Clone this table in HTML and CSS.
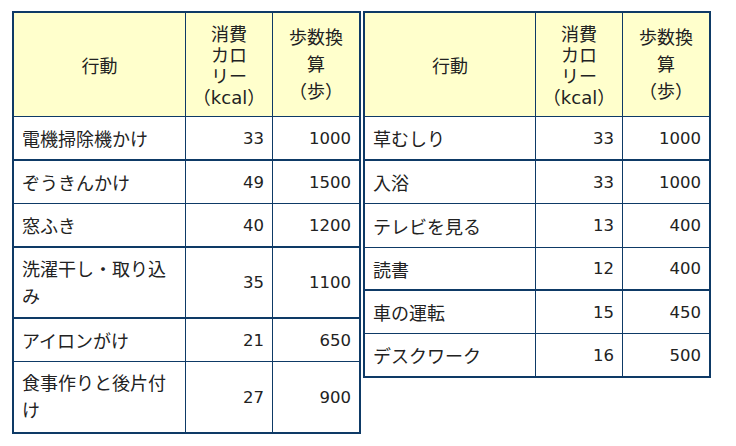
FILE: index.html
```html
<!DOCTYPE html>
<html lang="ja">
<head>
<meta charset="utf-8">
<link rel="stylesheet" href="styles.css">
</head>
<body>
<div class="wrap">
  <table class="tbl">
    <colgroup><col class="c1"><col class="c2"><col class="c3"></colgroup>
    <tr class="head">
      <th class="act">行動</th>
      <th class="kcal">消費<br>カロ<br>リー<br>（kcal）</th>
      <th class="steps thick-r">歩数換<br>算<br>（歩）</th>
    </tr>
    <tr class="r44 tb"><td>電機掃除機かけ</td><td class="num">33</td><td class="num thick-r">1000</td></tr>
    <tr class="r43"><td>ぞうきんかけ</td><td class="num">49</td><td class="num thick-r">1500</td></tr>
    <tr class="r44 tb"><td>窓ふき</td><td class="num">40</td><td class="num thick-r">1200</td></tr>
    <tr class="r71 tb"><td class="two">洗濯干し・取り込<br>み</td><td class="num">35</td><td class="num thick-r">1100</td></tr>
    <tr class="r43"><td>アイロンがけ</td><td class="num">21</td><td class="num thick-r">650</td></tr>
    <tr class="r72 tb"><td class="two">食事作りと後片付<br>け</td><td class="num">27</td><td class="num thick-r">900</td></tr>
  </table>
  <table class="tbl right">
    <colgroup><col class="c1r"><col class="c2"><col class="c3"></colgroup>
    <tr class="head">
      <th class="act">行動</th>
      <th class="kcal">消費<br>カロ<br>リー<br>（kcal）</th>
      <th class="steps thick-r">歩数換<br>算<br>（歩）</th>
    </tr>
    <tr class="r44 tb"><td>草むしり</td><td class="num">33</td><td class="num thick-r">1000</td></tr>
    <tr class="r43"><td>入浴</td><td class="num">33</td><td class="num thick-r">1000</td></tr>
    <tr class="r44"><td>テレビを見る</td><td class="num">13</td><td class="num thick-r">400</td></tr>
    <tr class="r43 tb"><td>読書</td><td class="num">12</td><td class="num thick-r">400</td></tr>
    <tr class="r43"><td>車の運転</td><td class="num">15</td><td class="num thick-r">450</td></tr>
    <tr class="r44 tb"><td>デスクワーク</td><td class="num">16</td><td class="num thick-r">500</td></tr>
  </table>
</div>
</body>
</html>
```
FILE: styles.css
```css
html, body {
  margin: 0;
  padding: 0;
  background: #ffffff;
}
body {
  font-family: "DejaVu Sans", "Noto Sans CJK JP", sans-serif;
  font-size: 18px;
  color: #222222;
}
.wrap {
  display: flex;
  align-items: flex-start;
  gap: 2px;
  padding: 11px 0 0 12px;
}
.tbl {
  border-collapse: separate;
  border-spacing: 0;
  table-layout: fixed;
  border-top: 2px solid #0e3a66;
  border-left: 2px solid #0e3a66;
}
.c1 { width: 172px; }
.c1r { width: 171px; }
.c2 { width: 87px; }
.c3 { width: 88px; }
.tbl th, .tbl td {
  box-sizing: border-box;
  border-right: 1px solid #0e3a66;
  border-bottom: 1px solid #0e3a66;
  padding: 0 8px;
  vertical-align: middle;
  font-weight: normal;
}
.tbl td.thick-r, .tbl th.thick-r {
  border-right-width: 2px;
}
.tbl tr.tb td {
  border-bottom-width: 2px;
}
.head th {
  background: #ffffcc;
  height: 104px;
  text-align: center;
  padding: 0 2px;
}
.head .kcal { line-height: 21px; padding-top: 2px; }
.head .steps { line-height: 27px; }
.tbl td { text-align: left; white-space: nowrap; }
.tbl td.num { text-align: right; font-size: 16.5px; }
.tbl td.two { line-height: 27px; white-space: normal; }
.r43 td { height: 43px; }
.r44 td { height: 44px; }
.r71 td { height: 71px; }
.r72 td { height: 72px; }
```
